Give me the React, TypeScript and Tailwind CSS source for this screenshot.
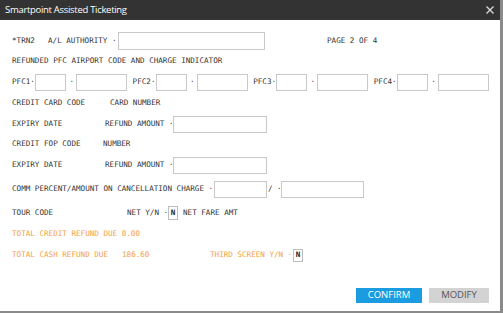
import React from 'react';

const mono = "font-['DejaVu_Sans_Mono',monospace] text-[7.6px] text-[#333] whitespace-pre";

function Box({ w, h = 17 }: { w: number; h?: number }) {
  return <div className="shrink-0 border border-[#c9c9c9] bg-white" style={{ width: w, height: h }} />;
}

function YN({ h }: { h: number }) {
  return (
    <div
      className="shrink-0 w-[10px] border border-[#bdbdbd] bg-white flex items-center justify-center font-bold text-[#222]"
      style={{ height: h }}
    >
      N
    </div>
  );
}

function PfcGroup({ n }: { n: number }) {
  return (
    <div className="flex items-center">
      <span className="w-[23px] shrink-0">PFC{n}·</span>
      <Box w={31} />
      <span className="w-[10px] shrink-0 text-right pr-[2px]">·</span>
      <Box w={51} />
    </div>
  );
}

export default function App() {
  return (
    <div className="w-[503px] h-[313px] bg-white flex flex-col border-r-[3px] border-b-[2px] border-[#8a8a8a] overflow-hidden">
      <div className="h-5 shrink-0 bg-[#333333] flex items-center justify-between pl-[5px] pr-[5px]">
        <span className="font-['Open_Sans',sans-serif] text-[9.5px] tracking-[-0.3px] text-white">Smartpoint Assisted Ticketing</span>
        <svg width="8" height="8" viewBox="0 0 8 8" className="mr-[1px]">
          <path d="M0.5 0.5 L7.5 7.5 M7.5 0.5 L0.5 7.5" stroke="#d8d8d8" strokeWidth="1.4" />
        </svg>
      </div>

      <div className={`${mono} flex flex-col pl-3 pt-[11px]`}>
        <div className="h-5 flex items-center">
          <span className="w-[36px] shrink-0">*TRN2</span>
          <span className="w-[70px] shrink-0">A/L AUTHORITY ·</span>
          <Box w={147} h={18} />
          <span className="ml-[62px]">PAGE 2 OF 4</span>
        </div>

        <div className="h-5 flex items-center">REFUNDED PFC AIRPORT CODE AND CHARGE INDICATOR</div>

        <div className="h-[22px] flex items-center gap-[5.6px]">
          <PfcGroup n={1} />
          <PfcGroup n={2} />
          <PfcGroup n={3} />
          <PfcGroup n={4} />
        </div>

        <div className="h-[19px] flex items-center">
          <span className="w-[98px] shrink-0">CREDIT CARD CODE</span>
          <span>CARD NUMBER</span>
        </div>

        <div className="h-[24px] flex items-center">
          <span className="w-[93px] shrink-0">EXPIRY DATE</span>
          <span className="w-[68px] shrink-0">REFUND AMOUNT ·</span>
          <Box w={94} />
        </div>

        <div className="h-[16px] flex items-center">
          <span className="w-[91px] shrink-0">CREDIT FOP CODE</span>
          <span>NUMBER</span>
        </div>

        <div className="h-[26px] flex items-center">
          <span className="w-[93px] shrink-0">EXPIRY DATE</span>
          <span className="w-[68px] shrink-0">REFUND AMOUNT ·</span>
          <Box w={94} />
        </div>

        <div className="h-[22px] flex items-center">
          <span className="w-[202px] shrink-0">COMM PERCENT/AMOUNT ON CANCELLATION CHARGE ·</span>
          <Box w={53} />
          <span className="w-[10px] shrink-0 pl-[1px]">/</span>
          <span className="w-[4px] shrink-0">·</span>
          <Box w={83} />
        </div>

        <div className="h-[26px] flex items-center">
          <span className="w-[115px] shrink-0">TOUR CODE</span>
          <span className="w-[41px] shrink-0">NET Y/N ·</span>
          <YN h={14} />
          <span className="ml-[5px]">NET FARE AMT</span>
        </div>

        <div className="h-[16px] flex items-center text-[#f5a042]">TOTAL CREDIT REFUND DUE 0.00</div>

        <div className="h-[26px] flex items-center text-[#f5a042]">
          <span className="w-[110px] shrink-0">TOTAL CASH REFUND DUE</span>
          <span className="w-[88px] shrink-0">186.60</span>
          <span className="w-[83px] shrink-0">THIRD SCREEN Y/N ·</span>
          <YN h={13} />
        </div>
      </div>

      <div className="mt-[20px] flex justify-end gap-[7px] pr-[11px] font-['Open_Sans',sans-serif] text-[9.5px]">
        <button className="w-[66px] h-[15px] bg-[#1b9be0] text-white flex items-center justify-center">CONFIRM</button>
        <button className="w-[60px] h-[15px] bg-[#d3d3d3] text-[#555] flex items-center justify-center">MODIFY</button>
      </div>
    </div>
  );
}
